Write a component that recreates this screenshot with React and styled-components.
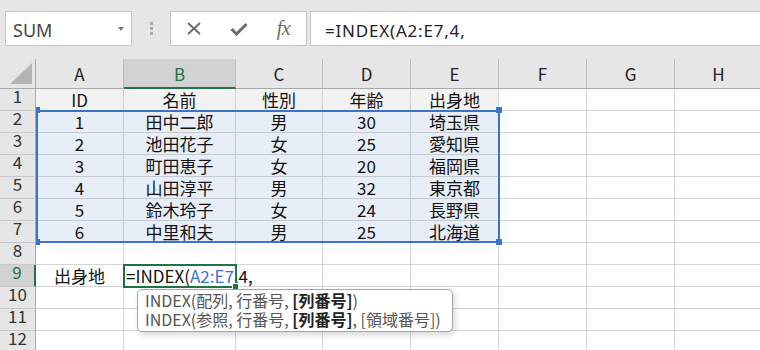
import React from 'react';
import styled, { createGlobalStyle } from 'styled-components';

const COLS = [
	{ key: 'A', w: 88 },
	{ key: 'B', w: 112 },
	{ key: 'C', w: 87 },
	{ key: 'D', w: 88 },
	{ key: 'E', w: 88 },
	{ key: 'F', w: 88 },
	{ key: 'G', w: 88 },
	{ key: 'H', w: 88 },
];

const TABLE = [
	['ID', '名前', '性別', '年齢', '出身地'],
	['1', '田中二郎', '男', '30', '埼玉県'],
	['2', '池田花子', '女', '25', '愛知県'],
	['3', '町田恵子', '女', '20', '福岡県'],
	['4', '山田淳平', '男', '32', '東京都'],
	['5', '鈴木玲子', '女', '24', '長野県'],
	['6', '中里和夫', '男', '25', '北海道'],
];

const ROW_COUNT = 12;
const ACTIVE_ROW = 9;
const ACTIVE_COL = 'B';

const cellContent = (row, col) => {
	if (row <= 7 && col < 5) return TABLE[row - 1][col];
	if (row === 9 && col === 0) return '出身地';
	if (row === 9 && col === 1)
		return (
			<>
				=INDEX(<Ref>A2:E7</Ref>,4,
			</>
		);
	return null;
};

const App = () => {
	const rows = [];
	for (let r = 1; r <= ROW_COUNT; r++) {
		rows.push(
			<RowHead key={`h${r}`} $row={r + 1} $active={r === ACTIVE_ROW}>
				{r}
			</RowHead>
		);
		COLS.forEach((c, i) => {
			const hl = r >= 2 && r <= 7 && i < 5;
			const fill = r === 1 && i < 5 ? '#f2f2f2' : hl ? '#e8eef8' : null;
			rows.push(
				<Cell
					key={`${c.key}${r}`}
					$row={r + 1}
					$col={i + 2}
					$hl={hl}
					$fill={fill}
					$left={r === 9 && i === 1}
				>
					{cellContent(r, i)}
				</Cell>
			);
		});
	}

	return (
		<Page>
			<GlobalStyle />
			<Toolbar>
				<NameBox>
					<span>SUM</span>
					<Caret />
				</NameBox>
				<Grip>
					<Dot />
					<Dot />
					<Dot />
				</Grip>
				<ButtonBox>
					<Slot>
						<svg width="14" height="13" viewBox="0 0 14 13">
							<path d="M1 1 L13 12 M13 1 L1 12" stroke="#666" strokeWidth="1.8" fill="none" />
						</svg>
					</Slot>
					<Slot>
						<svg width="18" height="14" viewBox="0 0 18 14">
							<polyline points="1.5,7 6.5,12 16.5,2" stroke="#6b6b6b" strokeWidth="3" fill="none" />
						</svg>
					</Slot>
					<Slot>
						<Fx>fx</Fx>
					</Slot>
				</ButtonBox>
				<FormulaBar>=INDEX(A2:E7,4,</FormulaBar>
			</Toolbar>

			<Sheet>
				<Grid>
					<Corner>
						<svg width="35" height="29" viewBox="0 0 35 29">
							<polygon points="10,25 32,4 32,25" fill="#b4b4b4" />
						</svg>
					</Corner>
					{COLS.map((c, i) => (
						<ColHead key={c.key} $col={i + 2} $active={c.key === ACTIVE_COL}>
							{c.key}
						</ColHead>
					))}
					{rows}
					<RangeBox>
						<Handle style={{ left: -4, top: -5 }} />
						<Handle style={{ right: -4, top: -5 }} />
						<Handle style={{ left: -4, bottom: -4 }} />
						<Handle style={{ right: -4, bottom: -4 }} />
					</RangeBox>
					<ActiveBox>
						<FillHandle />
					</ActiveBox>
				</Grid>

				<Tooltip>
					<div>
						INDEX(配列, 行番号, <b>[列番号]</b>)
					</div>
					<div>
						INDEX(参照, 行番号, <b>[列番号]</b>, [領域番号])
					</div>
				</Tooltip>
			</Sheet>
		</Page>
	);
};

export default App;

const GlobalStyle = createGlobalStyle`
	html, body {
		margin: 0;
		padding: 0;
		background: #fff;
		overflow: hidden;
	}
`;

const Page = styled.div`
	width: 760px;
	height: 350px;
	overflow: hidden;
	font-family: 'Noto Sans', sans-serif;
`;

const Toolbar = styled.div`
	height: 59px;
	box-sizing: border-box;
	padding: 11px 0 0 5px;
	display: flex;
	align-items: flex-start;
	background: #e6e6e6;
	overflow: hidden;
`;

const NameBox = styled.div`
	width: 127px;
	height: 35px;
	box-sizing: border-box;
	border: 1px solid #c6c6c6;
	background: #fff;
	display: flex;
	align-items: center;
	justify-content: space-between;
	padding: 3px 7px 0 7px;
	font-size: 18px;
	color: #444;
`;

const Caret = styled.span`
	width: 0;
	height: 0;
	border-left: 3px solid transparent;
	border-right: 3px solid transparent;
	border-top: 4px solid #777;
	margin-top: -2px;
`;

const Grip = styled.div`
	width: 38px;
	height: 35px;
	display: flex;
	flex-direction: column;
	align-items: center;
	justify-content: center;
	gap: 2px;
`;

const Dot = styled.span`
	width: 3px;
	height: 3px;
	background: #a9a9a9;
`;

const ButtonBox = styled.div`
	width: 137px;
	height: 35px;
	box-sizing: border-box;
	border: 1px solid #c6c6c6;
	background: #fff;
	display: flex;
`;

const Slot = styled.div`
	width: 45px;
	display: flex;
	align-items: center;
	justify-content: center;
`;

const Fx = styled.span`
	font-family: 'Liberation Serif', serif;
	font-style: italic;
	font-size: 20px;
	color: #6b6b6b;
	letter-spacing: -0.5px;
	margin-top: -1px;
`;

const FormulaBar = styled.div`
	flex: 1;
	height: 35px;
	box-sizing: border-box;
	margin: 0 -1px 0 3px;
	border: 1px solid #c6c6c6;
	background: #fff;
	display: flex;
	align-items: center;
	padding: 3px 0 0 14px;
	font-size: 17px;
	letter-spacing: 0.8px;
	color: #222;
	white-space: nowrap;
`;

const Sheet = styled.div`
	position: relative;
`;

const Grid = styled.div`
	display: grid;
	grid-template-columns: 36px ${COLS.map((c) => `${c.w}px`).join(' ')};
	grid-template-rows: 30px repeat(${ROW_COUNT}, 22px);
	font-family: 'Noto Sans CJK JP', sans-serif;
`;

const Corner = styled.div`
	grid-row: 1;
	grid-column: 1;
	box-sizing: border-box;
	background: #e6e6e6;
	border-right: 1px solid #a9a9a9;
	border-bottom: 1px solid #a9a9a9;
	position: relative;
	z-index: 3;

	svg {
		display: block;
	}
`;

const ColHead = styled.div`
	grid-row: 1;
	grid-column: ${(p) => p.$col};
	box-sizing: border-box;
	display: flex;
	align-items: center;
	justify-content: center;
	background: ${(p) => (p.$active ? '#d2d2d2' : '#e6e6e6')};
	border-right: 1px solid #bdbdbd;
	border-bottom: ${(p) => (p.$active ? '2px solid #217346' : '1px solid #a9a9a9')};
	color: ${(p) => (p.$active ? '#217346' : '#222')};
	font-size: 17px;
	line-height: 1;
	padding-top: ${(p) => (p.$active ? '1px' : '0')};
`;

const RowHead = styled.div`
	grid-row: ${(p) => p.$row};
	grid-column: 1;
	box-sizing: border-box;
	display: flex;
	align-items: center;
	justify-content: center;
	padding-bottom: 8px;
	background: ${(p) => (p.$active ? '#d2d2d2' : '#e6e6e6')};
	border-right: ${(p) => (p.$active ? '2px solid #217346' : '1px solid #a9a9a9')};
	border-bottom: 1px solid #c8c8c8;
	color: ${(p) => (p.$active ? '#217346' : '#333')};
	font-size: 17px;
	line-height: 1;
	position: relative;
	z-index: 3;
`;

const Cell = styled.div`
	grid-row: ${(p) => p.$row};
	grid-column: ${(p) => p.$col};
	box-sizing: border-box;
	display: flex;
	align-items: center;
	justify-content: ${(p) => (p.$left ? 'flex-start' : 'center')};
	padding-left: ${(p) => (p.$left ? '2px' : '0')};
	background: ${(p) => p.$fill || 'transparent'};
	border-right: 1px solid ${(p) => (p.$hl ? '#c4cad4' : '#d4d4d4')};
	border-bottom: 1px solid ${(p) => (p.$hl ? '#c4cad4' : '#d4d4d4')};
	font-size: 17px;
	line-height: 1;
	color: #111;
	white-space: nowrap;
	overflow: visible;
`;

const Ref = styled.span`
	color: #3c73c9;
`;

const RangeBox = styled.div`
	grid-column: 2 / 7;
	grid-row: 3 / 9;
	margin: -1px -1px 0 0;
	border: 2px solid #3c73c9;
	position: relative;
	z-index: 2;
	pointer-events: none;
`;

const Handle = styled.span`
	position: absolute;
	width: 6px;
	height: 6px;
	background: #3c73c9;
`;

const ActiveBox = styled.div`
	grid-column: 3;
	grid-row: 10;
	margin: -1px;
	border: 2px solid #217346;
	position: relative;
	z-index: 2;
	pointer-events: none;
`;

const FillHandle = styled.span`
	position: absolute;
	right: -4px;
	bottom: -4px;
	width: 5px;
	height: 5px;
	background: #217346;
	border: 1px solid #fff;
`;

const Tooltip = styled.div`
	position: absolute;
	left: 137px;
	top: 230px;
	z-index: 5;
	background: #fff;
	border: 1px solid #a6a6a6;
	border-radius: 5px;
	box-shadow: 2px 3px 6px rgba(0, 0, 0, 0.16);
	padding: 1px 11px 2px 7px;
	font-family: 'Noto Sans CJK JP', sans-serif;
	font-size: 16px;
	line-height: 19px;
	color: #555;
	white-space: nowrap;

	b {
		color: #222;
		font-weight: 700;
	}
`;
